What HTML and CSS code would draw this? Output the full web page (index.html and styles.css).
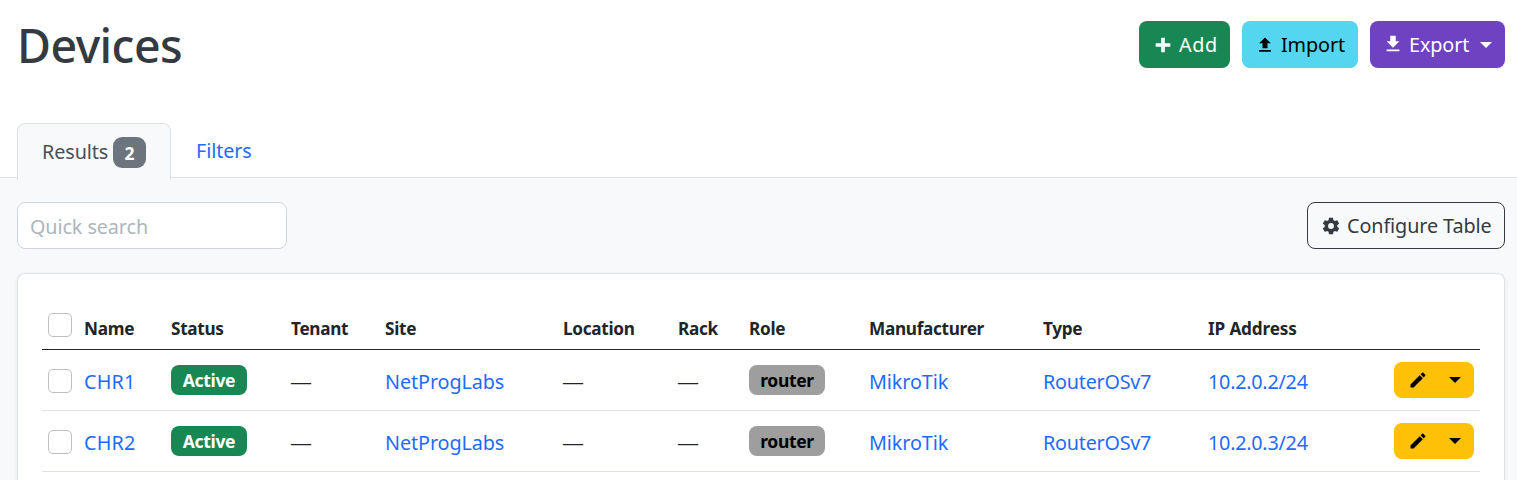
FILE: index.html
```html
<!DOCTYPE html>
<html lang="en">
<head>
<meta charset="utf-8">
<title>Devices</title>
<link rel="stylesheet" href="styles.css">
</head>
<body>
<svg class="sprite" width="0" height="0" aria-hidden="true">
  <symbol id="plus" viewBox="0 0 24 24"><path d="M20 14H14V20H10V14H4V10H10V4H14V10H20V14Z"/></symbol>
  <symbol id="upload" viewBox="0 0 24 24"><path d="M9 16V10H5L12 3L19 10H15V16H9M5 20V18H19V20H5Z"/></symbol>
  <symbol id="download" viewBox="0 0 24 24"><path d="M5 20H19V18H5M19 9H15V3H9V9H5L12 16L19 9Z"/></symbol>
  <symbol id="cog" viewBox="0 0 24 24"><path d="M12 15.5A3.5 3.5 0 0 1 8.5 12A3.5 3.5 0 0 1 12 8.5A3.5 3.5 0 0 1 15.5 12A3.5 3.5 0 0 1 12 15.5M19.43 12.97C19.47 12.65 19.5 12.33 19.5 12C19.5 11.67 19.47 11.34 19.43 11L21.54 9.37C21.73 9.22 21.78 8.95 21.66 8.73L19.66 5.27C19.54 5.05 19.27 4.96 19.05 5.05L16.56 6.05C16.04 5.66 15.5 5.32 14.87 5.07L14.5 2.42C14.46 2.18 14.25 2 14 2H10C9.75 2 9.54 2.18 9.5 2.42L9.13 5.07C8.5 5.32 7.96 5.66 7.44 6.05L4.95 5.05C4.73 4.96 4.46 5.05 4.34 5.27L2.34 8.73C2.21 8.95 2.27 9.22 2.46 9.37L4.57 11C4.53 11.34 4.5 11.67 4.5 12C4.5 12.33 4.53 12.65 4.57 12.97L2.46 14.63C2.27 14.78 2.21 15.05 2.34 15.27L4.34 18.73C4.46 18.95 4.73 19.03 4.95 18.95L7.44 17.94C7.96 18.34 8.5 18.68 9.13 18.93L9.5 21.58C9.54 21.82 9.75 22 10 22H14C14.25 22 14.46 21.82 14.5 21.58L14.87 18.93C15.5 18.67 16.04 18.34 16.56 17.94L19.05 18.95C19.27 19.03 19.54 18.95 19.66 18.73L21.66 15.27C21.78 15.05 21.73 14.78 21.54 14.63L19.43 12.97Z"/></symbol>
  <symbol id="pencil" viewBox="0 0 24 24"><path d="M20.71 7.04C21.1 6.65 21.1 6 20.71 5.63L18.37 3.29C18 2.9 17.35 2.9 16.96 3.29L15.12 5.12L18.87 8.87M3 17.25V21H6.75L17.81 9.93L14.06 6.18L3 17.25Z"/></symbol>
</svg>
<header class="page-header">
  <h1 class="title">Devices</h1>
  <div class="controls">
    <button class="btn btn-add"><svg class="icon"><use href="#plus"/></svg><span class="t-add">Add</span></button>
    <button class="btn btn-import"><svg class="icon"><use href="#upload"/></svg><span>Import</span></button>
    <button class="btn btn-export"><svg class="icon"><use href="#download"/></svg><span>Export</span><i class="caret"></i></button>
  </div>
</header>
<nav class="tabs">
  <a class="tab active"><span>Results</span><span class="count">2</span></a>
  <a class="tab"><span>Filters</span></a>
</nav>
<main class="content">
  <div class="toolbar">
    <input class="search" type="text" placeholder="Quick search">
    <button class="btn btn-configure"><svg class="icon"><use href="#cog"/></svg><span>Configure Table</span></button>
  </div>
  <section class="card">
    <table class="devices">
      <colgroup><col class="c-check"><col class="c-name"><col class="c-status"><col class="c-tenant"><col class="c-site"><col class="c-location"><col class="c-rack"><col class="c-role"><col class="c-maker"><col class="c-type"><col></colgroup>
      <thead>
        <tr><th><input class="check" type="checkbox"></th><th>Name</th><th>Status</th><th>Tenant</th><th>Site</th><th>Location</th><th>Rack</th><th>Role</th><th>Manufacturer</th><th>Type</th><th class="h-ip">IP Address</th></tr>
      </thead>
      <tbody>
        <tr>
          <td><input class="check" type="checkbox"></td><td><a class="t-name">CHR1</a></td><td><span class="badge active-badge">Active</span></td><td><span class="dash">—</span></td><td><a>NetProgLabs</a></td><td><span class="dash">—</span></td><td><span class="dash">—</span></td><td><span class="badge role-badge">router</span></td><td><a>MikroTik</a></td><td><a class="t-type">RouterOSv7</a></td>
          <td><div class="ip-cell"><a class="t-ip">10.2.0.2/24</a><span class="actions"><svg class="icon"><use href="#pencil"/></svg><i class="caret"></i></span></div></td>
        </tr>
        <tr>
          <td><input class="check" type="checkbox"></td><td><a class="t-name">CHR2</a></td><td><span class="badge active-badge">Active</span></td><td><span class="dash">—</span></td><td><a>NetProgLabs</a></td><td><span class="dash">—</span></td><td><span class="dash">—</span></td><td><span class="badge role-badge">router</span></td><td><a>MikroTik</a></td><td><a class="t-type">RouterOSv7</a></td>
          <td><div class="ip-cell"><a class="t-ip">10.2.0.3/24</a><span class="actions"><svg class="icon"><use href="#pencil"/></svg><i class="caret"></i></span></div></td>
        </tr>
      </tbody>
    </table>
  </section>
</main>
</body>
</html>
```
FILE: styles.css
```css
* { box-sizing: border-box; }
html { overflow: hidden; }
body { margin: 0; height: 480px; overflow: hidden; display: flex; flex-direction: column; background: #fff; color: #212529; font: 400 19.8px/30px "Noto Sans", "Open Sans", sans-serif; letter-spacing: -0.1px; }
.sprite { position: absolute; }
.icon { width: 20px; height: 20px; fill: currentColor; flex: none; }
.page-header { height: 123px; flex: none; padding: 15px 12px 0 17px; display: flex; justify-content: space-between; align-items: flex-start; }
.title { margin: 0; font-size: 46.5px; line-height: 61px; font-weight: 500; color: #343a40; letter-spacing: -0.55px; }
.controls { display: flex; gap: 12px; padding-top: 6px; }
.btn { height: 47px; display: flex; align-items: center; border: 0; border-radius: 8px; padding: 0 0 0 13px; font: inherit; letter-spacing: inherit; white-space: nowrap; }
.btn .icon { margin-right: 6px; }
.btn-add { width: 91px; background: #198754; color: #fff; }
.btn-add .icon { width: 22px; height: 22px; margin-right: 5px; }
.t-add { letter-spacing: 0.6px; }
.btn-import { width: 116px; background: #54d6f0; color: #000; }
.btn-export { width: 135px; background: #6f42c1; color: #fff; }
.caret { width: 0; height: 0; border: 6px solid transparent; border-top-color: currentColor; border-bottom: 0; }
.btn .caret { margin-left: 11px; }
.btn-export .icon { width: 22px; height: 22px; margin: -1px 5px 0 -1px; }
.tabs { height: 55px; flex: none; padding-left: 17px; display: flex; border-bottom: 1px solid #dee2e6; }
.tab { height: 55px; padding: 13px 24px 0 25px; color: #1f6bff; }
.tab.active { width: 154px; height: 57px; position: relative; display: flex; align-items: center; justify-content: space-between; padding: 0 24px; color: #495057; background: #f8f9fb; border: 1px solid #dee2e6; border-bottom: 0; border-radius: 8px 8px 0 0; }
.count { width: 33px; height: 31px; border-radius: 9px; background: #6c757d; color: #fff; font-size: 17.5px; line-height: 33px; font-weight: 700; text-align: center; }
.content { flex: 1; min-height: 0; padding: 24px 12px 0 17px; background: #f8f9fb; }
.toolbar { display: flex; justify-content: space-between; margin-bottom: 24px; }
.search { width: 270px; height: 47px; padding: 2px 12px 0; border: 1px solid #ced4da; border-radius: 8px; background: #fff; font: inherit; letter-spacing: -0.1px; }
.search::placeholder { color: #adb5bd; opacity: 1; }
.btn-configure { width: 198px; border: 1px solid #343a40; background: transparent; color: #343a40; }
.card { height: 207px; padding: 24px 24px 0; background: #fff; border: 1px solid #dee2e6; border-bottom: 0; border-radius: 8px 8px 0 0; box-shadow: 0 2px 5px rgba(0, 0, 0, .08); }
.devices { width: 1438px; table-layout: fixed; border-collapse: separate; border-spacing: 0; }
.c-check { width: 36px; } .c-name { width: 87px; } .c-status { width: 120px; } .c-tenant { width: 94px; } .c-site { width: 178px; } .c-location { width: 115px; } .c-rack { width: 71px; } .c-role { width: 120px; } .c-maker { width: 174px; } .c-type { width: 165px; }
th, td { padding: 0 6px; text-align: left; white-space: nowrap; vertical-align: middle; }
th { height: 52px; padding-top: 10px; border-bottom: 1px solid #212529; font-size: 17.2px; font-weight: 700; letter-spacing: -0.3px; }
.h-ip { letter-spacing: -0.15px; }
td { height: 61px; padding-top: 1px; border-bottom: 1px solid #dee2e6; }
th:first-child { padding-top: 2px; }
td a { display: block; padding-top: 2px; color: #1f6bff; }
.t-name { letter-spacing: 0.2px; }
.t-type { letter-spacing: -0.25px; }
.t-ip { letter-spacing: -0.25px; }
.check { appearance: none; display: block; width: 24px; height: 24px; margin: 0; border: 1px solid #bfbfbf; border-radius: 5px; background: #fff; }
.badge { display: block; width: 76px; height: 30px; margin-top: -1px; border-radius: 8px; font-size: 17.5px; line-height: 31px; font-weight: 700; letter-spacing: -0.35px; text-align: center; }
.active-badge { background: #198754; color: #fff; }
.role-badge { background: #9e9e9e; color: #000; }
.dash { display: block; width: 22px; margin-left: -1px; font-size: 22px; font-weight: 300; letter-spacing: 0; }
.ip-cell { display: flex; justify-content: space-between; align-items: center; }
.actions { width: 80px; height: 36px; margin-top: -2px; padding: 0 13px 0 14px; display: flex; align-items: center; justify-content: space-between; border-radius: 8px; background: #ffc107; color: #000; }
```
